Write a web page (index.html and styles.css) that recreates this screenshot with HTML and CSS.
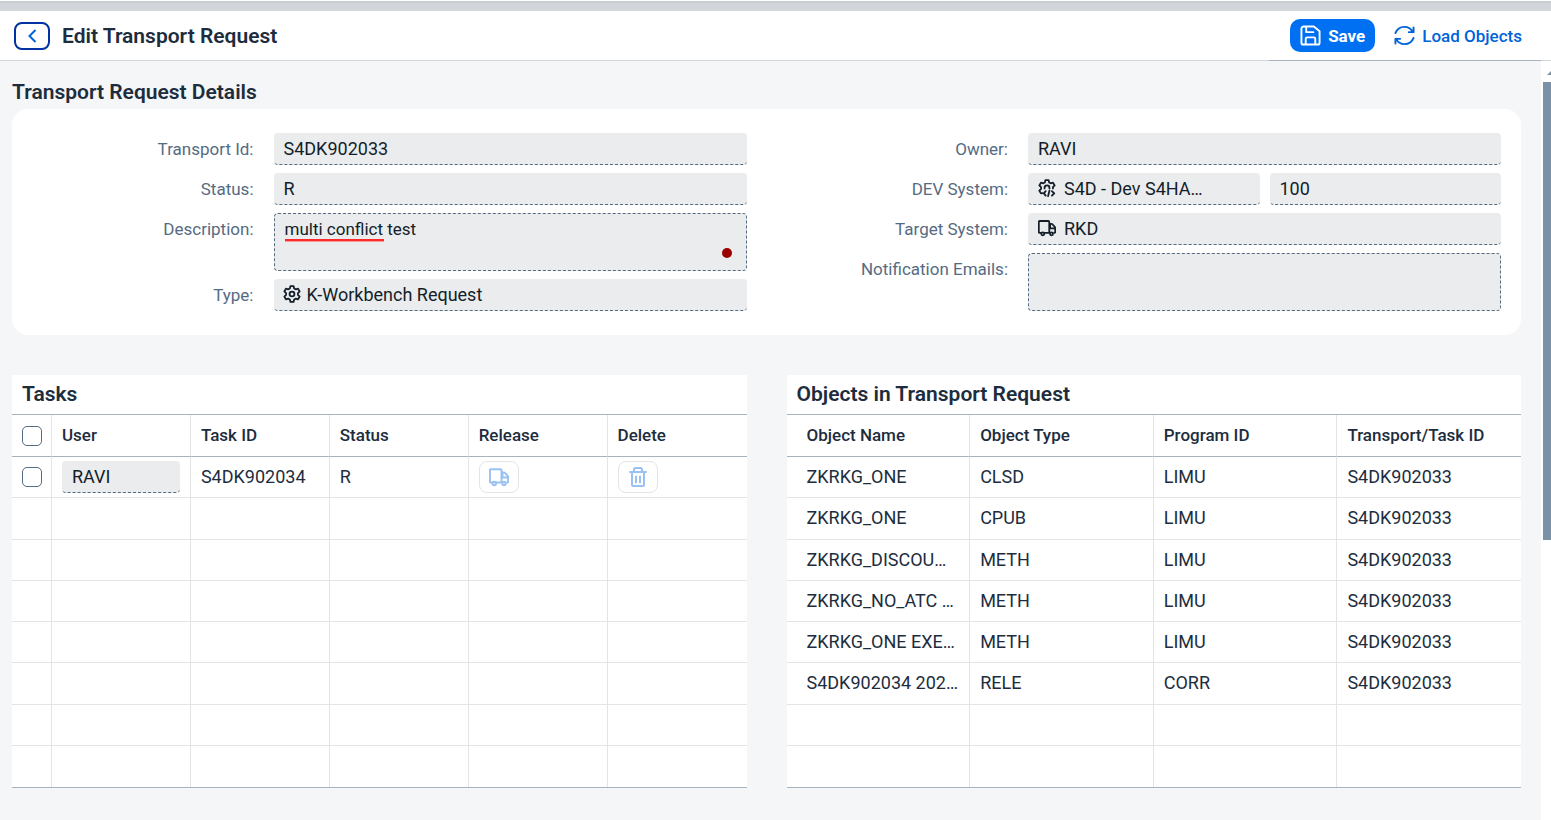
FILE: index.html
```html
<!DOCTYPE html>
<html lang="en">
<head>
<meta charset="utf-8">
<title>Edit Transport Request</title>
<link rel="stylesheet" href="styles.css">
</head>
<body>
<svg class="defs" aria-hidden="true">
  <symbol id="truck" viewBox="0 0 20 20"><path d="M3 15.500H1.900a1 1 0 0 1-1-1V3.200a1 1 0 0 1 1-1h9.600a1 1 0 0 1 1 1V15.500H7.500M12.500 5.500h2.300a2 2 0 0 1 1.400.6l2 2.200q.9.9.9 2.200v4a1 1 0 0 1-1 1M13.500 6v4.500h5.200"/><circle cx="5.300" cy="16.500" r="1.700"/><circle cx="15" cy="16.500" r="1.700"/></symbol>
  <symbol id="gear" viewBox="0 0 20 20"><path d="M8.300 1.200h3.400l.7 2.600 1.700 1 2.600-.7 1.800 3-1.900 1.900v2l1.900 1.900-1.800 3-2.600-.7-1.700 1-.7 2.600H8.300l-.7-2.600-1.700-1-2.600.7-1.800-3L3.400 11V9L1.500 7.100l1.800-3 2.600.7 1.700-1z"/><circle cx="10" cy="10" r="2.700"/></symbol>
  <symbol id="gear-code" viewBox="0 0 20 20"><path d="M5 15.800l-1.700.2-1.800-3L3.400 11V9L1.500 7.100l1.800-3 2.600.7 1.700-1 .7-2.600h3.400l.7 2.600 1.700 1 2.600-.7 1.800 3L16.600 9v1.500M7.300 10.500V9.800a2.700 2.700 0 0 1 5.400 0v.7M8.500 13.500l-2 2.500 2 2.500M12.700 13l-1.500 6M15.500 13.500l2.500 2.500-2.500 2.500"/></symbol>
</svg>
<div class="strip"></div>
<header class="bar">
  <button class="back" aria-label="Back"><svg class="chevron" viewBox="0 0 16 16"><path d="M11.500 2L5.500 8l6 6"/></svg></button>
  <h1>Edit Transport Request</h1>
  <button class="save"><svg class="icon lg" viewBox="0 0 22 22"><path d="M4 1.500h10.500l6 5V18.500a2 2 0 0 1-2 2H3.500a2 2 0 0 1-2-2V4a2.500 2.500 0 0 1 2.500-2.500zM6.500 2v5.500h7.500M6 20v-5.500a1.500 1.500 0 0 1 1.500-1.500h7a1.500 1.500 0 0 1 1.500 1.500V20"/></svg>Save</button>
  <button class="load"><svg class="icon lg" viewBox="0 0 22 22"><path d="M1.500 8.500C3 4.500 6.500 2 11 2c4 0 7 2 8.800 5.500M20.500 2.500v5h-5M20.500 13.500C19 17.500 15.500 20 11 20c-4 0-7-2-8.800-5.500M1.500 19.500v-5h5"/></svg>Load Objects</button>
</header>
<div class="body">
<main>
  <h2>Transport Request Details</h2>
  <form class="card">
    <div class="col">
      <div class="field"><label for="tid">Transport Id:</label><input class="ctl" id="tid" value="S4DK902033" readonly></div>
      <div class="field"><label for="status">Status:</label><input class="ctl" id="status" value="R" readonly></div>
      <div class="field"><label for="desc">Description:</label><div class="note"><textarea class="ctl area" id="desc" spellcheck="false" readonly>multi conflict test</textarea><span class="underline"></span><span class="dot"></span></div></div>
      <div class="field"><label for="type">Type:</label><div class="pick"><svg class="icon"><use href="#gear"/></svg><select class="ctl" id="type"><option>K-Workbench Request</option></select></div></div>
    </div>
    <div class="col">
      <div class="field"><label for="owner">Owner:</label><input class="ctl" id="owner" value="RAVI" readonly></div>
      <div class="field"><label for="dev">DEV System:</label><div class="pair"><div class="pick wide"><svg class="icon"><use href="#gear-code"/></svg><select class="ctl" id="dev"><option>S4D - Dev S4HA…</option></select></div><input class="ctl" aria-label="Client" value="100" readonly></div></div>
      <div class="field"><label for="target">Target System:</label><div class="pick wide"><svg class="icon"><use href="#truck"/></svg><select class="ctl" id="target"><option>RKD</option></select></div></div>
      <div class="field"><label for="mails">Notification Emails:</label><textarea class="ctl area" id="mails" readonly></textarea></div>
    </div>
  </form>
  <div class="tables">
    <section>
      <h2>Tasks</h2>
      <table class="tasks">
        <thead><tr><th class="sel"><input type="checkbox" aria-label="Select all"></th><th>User</th><th>Task ID</th><th>Status</th><th>Release</th><th>Delete</th></tr></thead>
        <tbody>
          <tr><td class="sel"><input type="checkbox" aria-label="Select RAVI"></td><td><input class="ctl" aria-label="User" value="RAVI" readonly></td><td>S4DK902034</td><td>R</td>
            <td><button class="act" aria-label="Release" disabled><svg class="icon"><use href="#truck"/></svg></button></td>
            <td><button class="act" aria-label="Delete" disabled><svg class="icon" viewBox="0 0 20 20"><path d="M2 5h16M4 5.500V18a1 1 0 0 0 1 1h10a1 1 0 0 0 1-1V5.500M6 4.500V2.500a1.500 1.500 0 0 1 1.500-1.500h5A1.500 1.500 0 0 1 14 2.500v2M8 9.500v6M12 9.500v6"/></svg></button></td></tr>
          <tr><td></td><td></td><td></td><td></td><td></td><td></td></tr>
          <tr><td></td><td></td><td></td><td></td><td></td><td></td></tr>
          <tr><td></td><td></td><td></td><td></td><td></td><td></td></tr>
          <tr><td></td><td></td><td></td><td></td><td></td><td></td></tr>
          <tr><td></td><td></td><td></td><td></td><td></td><td></td></tr>
          <tr><td></td><td></td><td></td><td></td><td></td><td></td></tr>
          <tr><td></td><td></td><td></td><td></td><td></td><td></td></tr>
        </tbody>
      </table>
    </section>
    <section>
      <h2>Objects in Transport Request</h2>
      <table class="objects">
        <thead><tr><th>Object Name</th><th>Object Type</th><th>Program ID</th><th>Transport/Task ID</th></tr></thead>
        <tbody>
          <tr><td>ZKRKG_ONE</td><td>CLSD</td><td>LIMU</td><td>S4DK902033</td></tr>
          <tr><td>ZKRKG_ONE</td><td>CPUB</td><td>LIMU</td><td>S4DK902033</td></tr>
          <tr><td>ZKRKG_DISCOU…</td><td>METH</td><td>LIMU</td><td>S4DK902033</td></tr>
          <tr><td>ZKRKG_NO_ATC …</td><td>METH</td><td>LIMU</td><td>S4DK902033</td></tr>
          <tr><td>ZKRKG_ONE EXE…</td><td>METH</td><td>LIMU</td><td>S4DK902033</td></tr>
          <tr><td>S4DK902034 202…</td><td>RELE</td><td>CORR</td><td>S4DK902033</td></tr>
          <tr><td></td><td></td><td></td><td></td></tr>
          <tr><td></td><td></td><td></td><td></td></tr>
        </tbody>
      </table>
    </section>
  </div>
</main>
<div class="scroll"><span class="arrow"></span><span class="thumb"></span></div>
</div>
</body>
</html>
```
FILE: styles.css
```css
* { box-sizing: border-box; }
body { margin: 0; min-height: 100vh; display: flex; flex-direction: column; overflow: hidden; background: #f5f6f7; color: #1d2d3e; font: 17px/24px Roboto, "Liberation Sans", sans-serif; }
input, textarea, select, button { font: inherit; color: inherit; margin: 0; }
h1, h2 { margin: 0; font-size: 21px; line-height: 26px; font-weight: 600; }
.defs { display: none; }
.strip { height: 11px; border-top: 1px solid #fff; background: linear-gradient(#c4c9ce, #d2d6db 3px); }
.bar { position: relative; display: flex; align-items: center; height: 50px; padding: 0 20px 0 14px; background: #fff; border-bottom: 1px solid #d3d5d7; }
.bar::after { content: ""; position: absolute; right: 10px; bottom: -1px; width: 272px; height: 1px; background: #a8b3bf; }
.bar button { display: flex; align-items: center; cursor: pointer; }
.back { justify-content: center; width: 36px; height: 28px; padding: 0; margin-right: 12px; border: 2px solid #0032a5; border-radius: 8px; background: #fff; color: #0064d9; }
.chevron { width: 16px; height: 16px; fill: none; stroke: currentColor; stroke-width: 2; }
.bar h1 { flex: 1; }
.icon { width: 18px; height: 18px; flex: none; fill: none; stroke: currentColor; stroke-width: 2; stroke-linejoin: round; stroke-linecap: round; }
.icon.lg { width: 21px; height: 21px; }
.save, .load { height: 33px; gap: 7px; border: 0; border-radius: 10px; padding: 0 9px; }
.bar .save { padding: 0 10px; background: #0070f2; color: #fff; font-weight: 700; margin-right: 10px; }
.bar .load { background: none; color: #0064d9; font-weight: 500; }
.body { flex: 1; display: flex; }
main { flex: 1; min-width: 0; padding: 18px 20px 32px 12px; }
.card { display: grid; grid-template-columns: 1fr 1fr; margin: 4px 0 40px; padding: 24px 0; background: #fff; border-radius: 16px; }
.col { display: flex; flex-direction: column; gap: 8px; padding: 0 20px; }
.field { display: grid; grid-template-columns: 1fr 2fr; gap: 5px; }
.field label { padding-right: 15px; text-align: right; line-height: 32px; color: #556b82; }
.ctl { display: block; width: 100%; min-width: 0; height: 32px; padding: 0 10px; border: 0; border-bottom: 1px dashed #556b82; border-radius: 4px; background: #eaecee; color: #131e29; outline: 0; appearance: none; }
select.ctl, input.ctl { font-size: 18px; }
.area { height: 58px; padding: 3px 10px; border: 1px dashed #556b82; resize: none; line-height: 24px; }
.note, .pick { position: relative; }
.underline { position: absolute; left: 11px; top: 26px; width: 99px; height: 3px; background: #ff2a2a; border-bottom: 1px solid #f69a9b; }
.dot { position: absolute; right: 15px; bottom: 13px; width: 10px; height: 10px; border-radius: 50%; background: #9b0000; }
.pick .icon { position: absolute; left: 9px; top: 6px; color: #131e29; }
.pick .ctl { padding-left: 33px; }
.pick.wide .ctl { padding-left: 36px; }
.pick.wide .icon { left: 10px; }
.pair { display: grid; grid-template-columns: 1fr 1fr; gap: 10px; }
.tables { display: grid; grid-template-columns: 1fr 1fr; gap: 40px; }
section { background: #fff; min-width: 0; }
section h2 { padding: 6px 10px 7px; border-bottom: 1px solid #a8b3bf; }
table { width: 100%; height: 373px; table-layout: fixed; border-collapse: separate; border-spacing: 0; border-bottom: 1px solid #a8b3bf; }
th, td { padding: 0 10px; text-align: left; white-space: nowrap; overflow: hidden; border-right: 1px solid #e3e4e5; border-bottom: 1px solid #e3e4e5; }
th { height: 42px; padding-bottom: 2px; font-weight: 500; border-bottom-color: #a8b3bf; }
td { height: 41px; font-size: 18px; }
th:last-child, td:last-child { border-right: 0; }
tbody tr:last-child td { border-bottom: 0; }
.sel { width: 40px; padding-bottom: 0; }
.objects th:first-child, .objects td:first-child { padding-left: 20px; }
[type="checkbox"] { display: block; appearance: none; width: 20px; height: 20px; border: 1px solid #556b82; border-radius: 5px; background: #fff; }
.act { display: flex; align-items: center; justify-content: center; width: 40px; height: 32px; padding: 0; border: 1px solid #e3e4e6; border-radius: 8px; background: #fff; color: #99c1f1; }
.act .icon { width: 20px; height: 20px; }
.scroll { width: 10px; padding: 10px 0 0 2px; background: #fff; overflow: hidden; }
.arrow { display: block; width: 0; margin-left: 4px; border: solid transparent; border-width: 0 4px 4px; border-bottom-color: #7b91a8; }
.thumb { display: block; height: 458px; margin-top: 7px; background: #7b91a8; }
```
